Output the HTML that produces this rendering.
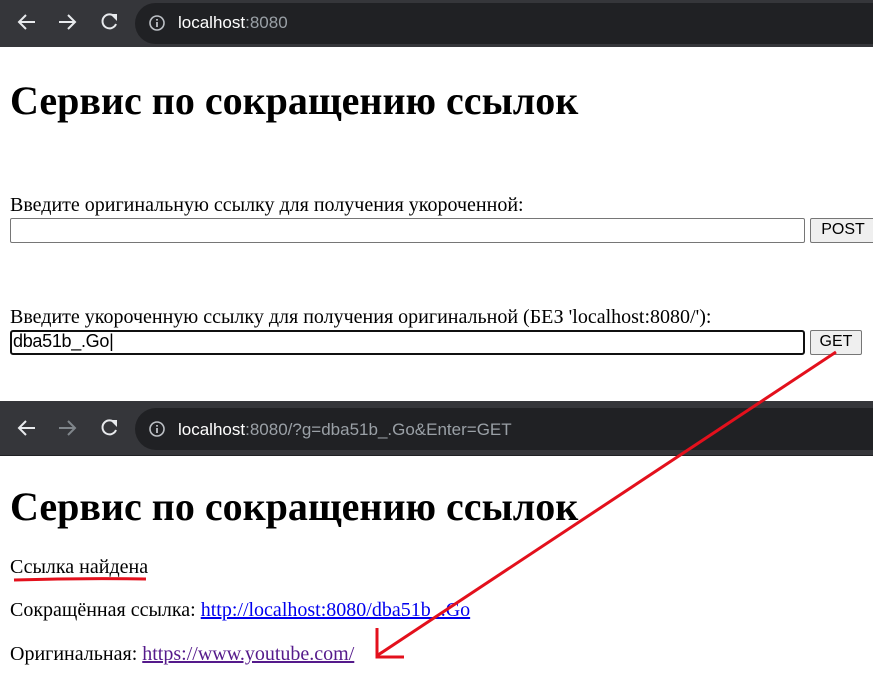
<!DOCTYPE html>
<html><head><meta charset="utf-8"><style>
body{margin:0;width:873px;height:685px;position:relative;background:#fff;overflow:hidden;font-family:"Liberation Serif","DejaVu Serif",serif;color:#000}
.a{position:absolute;white-space:nowrap}
.bar{position:absolute;left:0;width:873px;background:#35363a}
.omni{position:absolute;left:135px;right:0;background:#202124;border-radius:22px 0 0 22px}
.url{position:absolute;font-family:"Liberation Sans",sans-serif;font-size:17px;color:#fff}
.url span{color:#9aa0a6}
h1{margin:0;font-size:40px;font-weight:bold;position:absolute;left:10px;white-space:nowrap}
.t{font-size:20px}
.inp{position:absolute;border:1px solid #767676;border-radius:2px;background:#fff;box-sizing:border-box}
.btn{position:absolute;background:#efefef;border:1px solid #767676;border-radius:2px;box-sizing:border-box;font-family:"Liberation Sans",sans-serif;font-size:16px;text-align:center;color:#000}
a{color:#0000ee}
</style></head><body>
<div class="bar" style="top:0;height:47px"></div>
<div class="omni" style="top:3px;height:41px"></div>
<svg class="a" style="left:0;top:0" width="135" height="47"><g stroke="#e8eaed" stroke-width="2" fill="none"><path d="M35 22H19M26 15l-7 7 7 7"/><path d="M59 22h16M68 15l7 7-7 7"/><path d="M115 17a7 7 0 1 0 1 7"/></g><path d="M110 14h7v7z" fill="#e8eaed"/></svg>
<svg class="a" style="left:148px;top:14px" width="18" height="18"><circle cx="9" cy="9" r="7" stroke="#bdc1c6" stroke-width="1.6" fill="none"/><path d="M9 8v5M9 5v1.6" stroke="#bdc1c6" stroke-width="1.8"/></svg>
<div class="url" style="left:178px;top:13px">localhost<span>:8080</span></div>

<h1 style="top:77px">Сервис по сокращению ссылок</h1>
<div class="a t" style="left:10px;top:194px">Введите оригинальную ссылку для получения укороченной:</div>
<div class="inp" style="left:10px;top:218px;width:795px;height:25px"></div>
<div class="btn" style="left:810px;top:218px;width:66px;height:25px;line-height:22px">POST</div>
<div class="a t" style="left:10px;top:306px">Введите укороченную ссылку для получения оригинальной (БЕЗ 'localhost:8080/'):</div>
<div class="inp" style="left:10px;top:330px;width:795px;height:25px;border:2px solid #101010;border-radius:3px"></div>
<div class="a" style="left:13px;top:331px;font-family:'Liberation Sans',sans-serif;font-size:18px;letter-spacing:-0.3px">dba51b_.Go|</div>
<div class="btn" style="left:810px;top:330px;width:52px;height:25px;line-height:22px">GET</div>

<div class="bar" style="top:401px;height:54px;border-bottom:1px solid #202124"></div>
<div class="omni" style="top:408px;height:42px"></div>
<svg class="a" style="left:0;top:401px" width="135" height="54"><g stroke-width="2" fill="none"><path d="M35 27H19M26 20l-7 7 7 7" stroke="#e8eaed"/><path d="M59 27h16M68 20l7 7-7 7" stroke="#80868b"/><path d="M115 22a7 7 0 1 0 1 7" stroke="#e8eaed"/></g><path d="M110 19h7v7z" fill="#e8eaed"/></svg>
<svg class="a" style="left:148px;top:420px" width="18" height="18"><circle cx="9" cy="9" r="7" stroke="#bdc1c6" stroke-width="1.6" fill="none"/><path d="M9 8v5M9 5v1.6" stroke="#bdc1c6" stroke-width="1.8"/></svg>
<div class="url" style="left:178px;top:420px">localhost<span>:8080/?g=dba51b_.Go&amp;Enter=GET</span></div>

<h1 style="top:483px">Сервис по сокращению ссылок</h1>
<div class="a t" style="left:10px;top:556px">Ссылка найдена</div>
<div class="a t" style="left:10px;top:599px">Сокращённая ссылка: <a href="#">http://localhost:8080/dba51b_.Go</a></div>
<div class="a t" style="left:10px;top:643px">Оригинальная: <a href="#" style="color:#551a8b">https://www.youtube.com/</a></div>

<svg class="a" style="left:0;top:0" width="873" height="685"><g stroke="#e3101c" stroke-width="3" fill="none"><path d="M14 580Q80 578 146 579"/><path d="M836 352L378 655"/><path d="M377 628V657H404"/></g></svg>
</body></html>
